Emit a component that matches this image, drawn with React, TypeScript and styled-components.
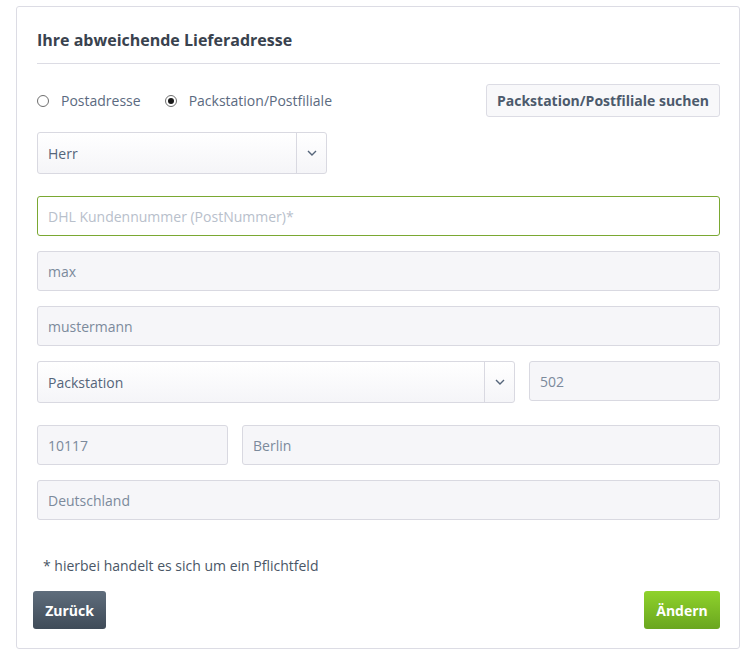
import React, { useState } from 'react'
import styled, { createGlobalStyle } from 'styled-components'

const GlobalStyle = createGlobalStyle`
  body {
    margin: 0;
    background: #ffffff;
    font-family: "Open Sans", "DejaVu Sans", sans-serif;
  }
`

const Page = styled.div`
  padding: 6px 9px 6px 16px;
`
const Card = styled.div`
  border: 1px solid #dcdce4;
  border-radius: 3px;
  background: #ffffff;
  padding: 22px 19px 19px 20px;
`
const Title = styled.h2`
  margin: 0;
  font-size: 16px;
  line-height: 22px;
  font-weight: 700;
  color: #39424e;
  padding-bottom: 12px;
  border-bottom: 1px solid #dcdce4;
`
const TypeRow = styled.div`
  display: flex;
  align-items: center;
  justify-content: space-between;
  margin-top: 20px;
  margin-bottom: 15px;
`
const RadioGroup = styled.div`
  display: flex;
  align-items: center;
  gap: 24px;
`
const RadioLabel = styled.label`
  display: flex;
  align-items: center;
  gap: 12px;
  font-size: 14px;
  color: #5b6a80;
  cursor: pointer;
`
const RadioCircle = styled.span<{ checked: boolean }>`
  box-sizing: border-box;
  width: 12px;
  height: 12px;
  border-radius: 50%;
  border: 1px solid #6e6e6e;
  background: #ffffff;
  display: flex;
  align-items: center;
  justify-content: center;
  &::after {
    content: '';
    width: 6px;
    height: 6px;
    border-radius: 50%;
    background: #1a1a1a;
    display: ${({ checked }) => (checked ? 'block' : 'none')};
  }
`
const SearchButton = styled.button`
  box-sizing: border-box;
  height: 33px;
  padding: 0 10px;
  border: 1px solid #dcdce4;
  border-radius: 3px;
  background: #f8f8fa;
  font-family: inherit;
  font-size: 14px;
  font-weight: 700;
  color: #4c5a6c;
  cursor: pointer;
`
const Row = styled.div<{ gap?: number; spacing?: number }>`
  display: flex;
  gap: ${({ gap }) => gap ?? 14}px;
  margin-bottom: ${({ spacing }) => spacing ?? 15}px;
`
const Select = styled.div<{ width?: string }>`
  box-sizing: border-box;
  display: flex;
  height: 42px;
  width: ${({ width }) => width ?? '100%'};
  flex: ${({ width }) => (width ? 'none' : '1')};
  border: 1px solid #d9d9e1;
  border-radius: 3px;
  background: linear-gradient(#ffffff, #f5f5f8);
`
const SelectValue = styled.div`
  flex: 1;
  display: flex;
  align-items: center;
  padding-left: 10px;
  font-size: 14px;
  color: #55657a;
`
const SelectArrow = styled.div`
  width: 29px;
  border-left: 1px solid #d9d9e1;
  display: flex;
  align-items: center;
  justify-content: center;
  color: #55657a;
`
const Input = styled.input<{ width?: string; focused?: boolean }>`
  box-sizing: border-box;
  height: 40px;
  width: ${({ width }) => width ?? '100%'};
  flex: ${({ width }) => (width ? 'none' : '1')};
  min-width: 0;
  padding: 0 10px;
  border: 1px solid ${({ focused }) => (focused ? '#7aa832' : '#d9d9e1')};
  border-radius: 3px;
  background: ${({ focused }) => (focused ? '#ffffff' : '#f6f6f9')};
  font-family: inherit;
  font-size: 14px;
  color: #7c8a9c;
  outline: none;
  &::placeholder {
    color: #b8c0cb;
  }
`
const Note = styled.p`
  margin: 36px 0 15px;
  padding-left: 6px;
  font-size: 14px;
  line-height: 20px;
  color: #4a5666;
`
const Actions = styled.div`
  display: flex;
  justify-content: space-between;
  margin-left: -4px;
`
const ActionButton = styled.button<{ variant: 'back' | 'submit' }>`
  box-sizing: border-box;
  height: 38px;
  width: ${({ variant }) => (variant === 'back' ? '73px' : '76px')};
  padding: 0;
  border: none;
  border-radius: 3px;
  font-family: inherit;
  font-size: 14px;
  font-weight: 700;
  color: #ffffff;
  cursor: pointer;
  background: ${({ variant }) =>
    variant === 'back'
      ? 'linear-gradient(#5f6d7c, #3f4b58)'
      : 'linear-gradient(#8fd22c, #6aa61f)'};
`

const Chevron = () => (
  <svg width="10" height="6" viewBox="0 0 10 6" fill="none">
    <path d="M1 1l4 4 4-4" stroke="currentColor" strokeWidth="1.4" />
  </svg>
)

export default function App() {
  const [type, setType] = useState<'post' | 'pack'>('pack')

  return (
    <Page>
      <GlobalStyle />
      <Card>
        <Title>Ihre abweichende Lieferadresse</Title>

        <TypeRow>
          <RadioGroup>
            <RadioLabel onClick={() => setType('post')}>
              <RadioCircle checked={type === 'post'} />
              Postadresse
            </RadioLabel>
            <RadioLabel onClick={() => setType('pack')}>
              <RadioCircle checked={type === 'pack'} />
              Packstation/Postfiliale
            </RadioLabel>
          </RadioGroup>
          <SearchButton>Packstation/Postfiliale suchen</SearchButton>
        </TypeRow>

        <Row spacing={22}>
          <Select width="290px">
            <SelectValue>Herr</SelectValue>
            <SelectArrow>
              <Chevron />
            </SelectArrow>
          </Select>
        </Row>

        <Row>
          <Input focused placeholder="DHL Kundennummer (PostNummer)*" />
        </Row>
        <Row>
          <Input defaultValue="max" />
        </Row>
        <Row>
          <Input defaultValue="mustermann" />
        </Row>

        <Row spacing={22}>
          <Select>
            <SelectValue>Packstation</SelectValue>
            <SelectArrow>
              <Chevron />
            </SelectArrow>
          </Select>
          <Input width="191px" defaultValue="502" />
        </Row>

        <Row>
          <Input width="191px" defaultValue="10117" />
          <Input defaultValue="Berlin" />
        </Row>
        <Row spacing={0}>
          <Input defaultValue="Deutschland" />
        </Row>

        <Note>* hierbei handelt es sich um ein Pflichtfeld</Note>

        <Actions>
          <ActionButton variant="back">Zurück</ActionButton>
          <ActionButton variant="submit">Ändern</ActionButton>
        </Actions>
      </Card>
    </Page>
  )
}
